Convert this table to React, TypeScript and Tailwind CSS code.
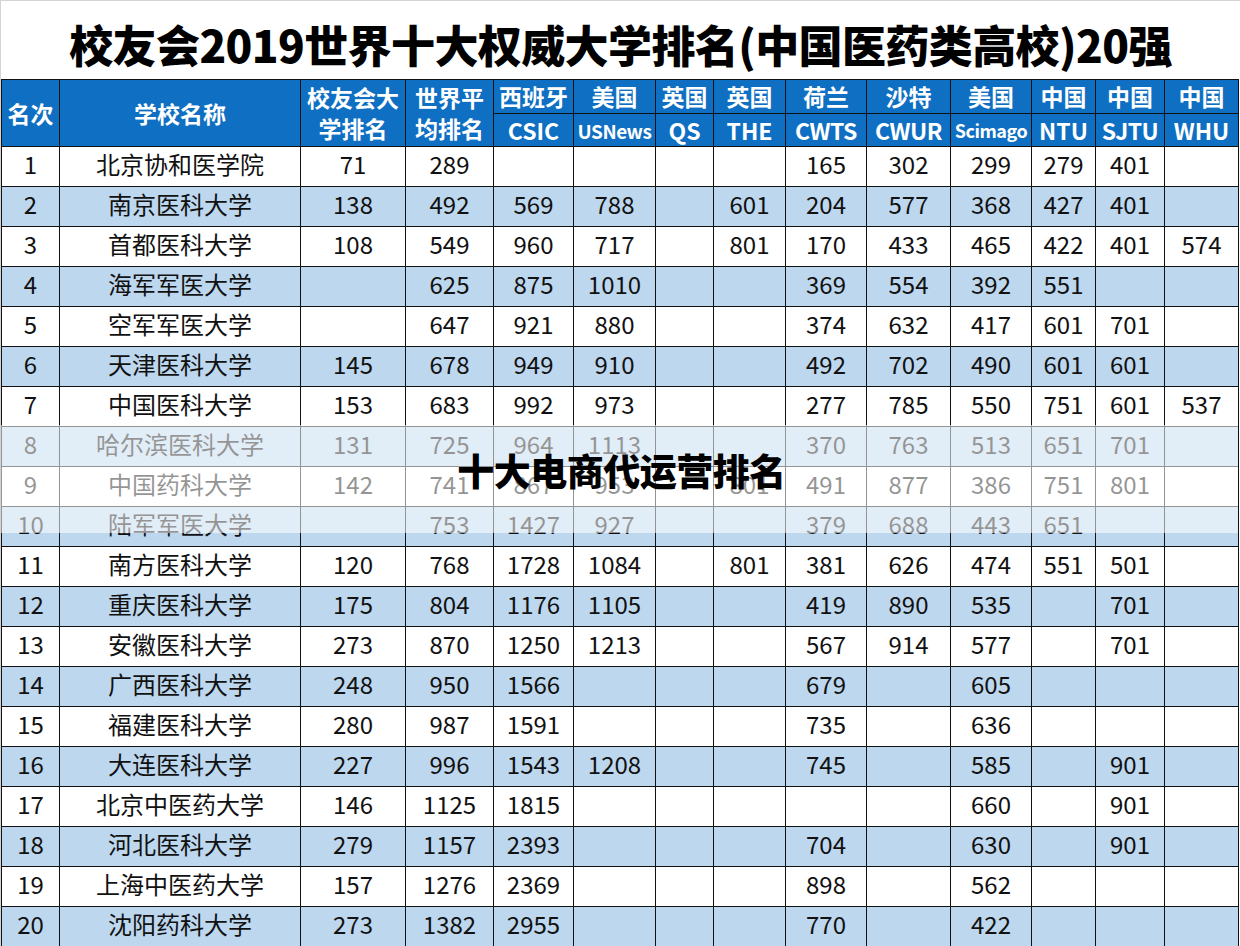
const FONT = "font-['Noto_Sans_CJK_SC','Noto_Sans',sans-serif]";

type Row = [number, string, ...(string | number)[]];

const rows: Row[] = [
  [1, "北京协和医学院", 71, 289, "", "", "", "", 165, 302, 299, 279, 401, ""],
  [2, "南京医科大学", 138, 492, 569, 788, "", 601, 204, 577, 368, 427, 401, ""],
  [3, "首都医科大学", 108, 549, 960, 717, "", 801, 170, 433, 465, 422, 401, 574],
  [4, "海军军医大学", "", 625, 875, 1010, "", "", 369, 554, 392, 551, "", ""],
  [5, "空军军医大学", "", 647, 921, 880, "", "", 374, 632, 417, 601, 701, ""],
  [6, "天津医科大学", 145, 678, 949, 910, "", "", 492, 702, 490, 601, 601, ""],
  [7, "中国医科大学", 153, 683, 992, 973, "", "", 277, 785, 550, 751, 601, 537],
  [8, "哈尔滨医科大学", 131, 725, 964, 1113, "", "", 370, 763, 513, 651, 701, ""],
  [9, "中国药科大学", 142, 741, 867, 953, "", 801, 491, 877, 386, 751, 801, ""],
  [10, "陆军军医大学", "", 753, 1427, 927, "", "", 379, 688, 443, 651, "", ""],
  [11, "南方医科大学", 120, 768, 1728, 1084, "", 801, 381, 626, 474, 551, 501, ""],
  [12, "重庆医科大学", 175, 804, 1176, 1105, "", "", 419, 890, 535, "", 701, ""],
  [13, "安徽医科大学", 273, 870, 1250, 1213, "", "", 567, 914, 577, "", 701, ""],
  [14, "广西医科大学", 248, 950, 1566, "", "", "", 679, "", 605, "", "", ""],
  [15, "福建医科大学", 280, 987, 1591, "", "", "", 735, "", 636, "", "", ""],
  [16, "大连医科大学", 227, 996, 1543, 1208, "", "", 745, "", 585, "", 901, ""],
  [17, "北京中医药大学", 146, 1125, 1815, "", "", "", "", "", 660, "", 901, ""],
  [18, "河北医科大学", 279, 1157, 2393, "", "", "", 704, "", 630, "", 901, ""],
  [19, "上海中医药大学", 157, 1276, 2369, "", "", "", 898, "", 562, "", "", ""],
  [20, "沈阳药科大学", 273, 1382, 2955, "", "", "", 770, "", 422, "", "", ""],
];

// country / ranking source pairs for the split header columns
const sources = [
  { top: "西班牙", bottom: "CSIC", size: "text-[23px]" },
  { top: "美国", bottom: "USNews", size: "text-[19px] tracking-[-0.5px]" },
  { top: "英国", bottom: "QS", size: "text-[23px]" },
  { top: "英国", bottom: "THE", size: "text-[23px]" },
  { top: "荷兰", bottom: "CWTS", size: "text-[23px] tracking-[-0.5px]" },
  { top: "沙特", bottom: "CWUR", size: "text-[23px] tracking-[-0.5px]" },
  { top: "美国", bottom: "Scimago", size: "text-[18px] tracking-[-0.5px]" },
  { top: "中国", bottom: "NTU", size: "text-[23px]" },
  { top: "中国", bottom: "SJTU", size: "text-[23px] tracking-[-0.5px]" },
  { top: "中国", bottom: "WHU", size: "text-[23px]" },
];

const th = "border border-[#111] bg-[#0f6fc2] text-white font-bold leading-none text-center p-0 overflow-hidden whitespace-nowrap";
const td = "border border-[#111] text-[24px] leading-none text-center px-0 pt-0 pb-[5px] text-[#111]";

export default function App() {
  return (
    <div className={`w-[1240px] h-[946px] bg-white border-t border-l border-[#d4d4d4] ${FONT}`}>
      <h1 className="h-[78px] flex items-center justify-center text-[44px] font-black tracking-[-0.6px] text-black pt-[8px]">
        校友会2019世界十大权威大学排名(中国医药类高校)20强
      </h1>

      <div className="relative w-[1237px]">
        <table className="table-fixed border-collapse w-[1237px]">
          <colgroup>
            <col className="w-[58px]" />
            <col className="w-[241px]" />
            <col className="w-[105px]" />
            <col className="w-[88px]" />
            <col className="w-[80px]" />
            <col className="w-[82px]" />
            <col className="w-[58px]" />
            <col className="w-[72px]" />
            <col className="w-[81px]" />
            <col className="w-[84px]" />
            <col className="w-[81px]" />
            <col className="w-[64px]" />
            <col className="w-[69px]" />
            <col className="w-[74px]" />
          </colgroup>
          <thead>
            <tr className="h-[34px]">
              <th rowSpan={2} className={`${th} text-[23px]`}>名次</th>
              <th rowSpan={2} className={`${th} text-[23px]`}>学校名称</th>
              <th rowSpan={2} className={`${th} text-[23px]`}>
                <div className="flex flex-col gap-[8px]">
                  <span>校友会大</span>
                  <span>学排名</span>
                </div>
              </th>
              <th rowSpan={2} className={`${th} text-[23px]`}>
                <div className="flex flex-col gap-[8px]">
                  <span>世界平</span>
                  <span>均排名</span>
                </div>
              </th>
              {sources.map((s, i) => (
                <th key={i} className={`${th} text-[23px]`}>{s.top}</th>
              ))}
            </tr>
            <tr className="h-[33px]">
              {sources.map((s, i) => (
                <th key={i} className={`${th} ${s.size}`}>{s.bottom}</th>
              ))}
            </tr>
          </thead>
          <tbody>
            {rows.map((r) => (
              <tr key={r[0]} className={`h-[40px] ${r[0] % 2 === 0 ? "bg-[#bdd7ee]" : "bg-white"}`}>
                {r.map((v, j) => (
                  <td key={j} className={td}>{v}</td>
                ))}
              </tr>
            ))}
          </tbody>
        </table>

        {/* translucent watermark band over rows 8-10 */}
        <div className="absolute left-0 right-0 top-[346px] h-[108px] bg-white/55 flex justify-center pt-[27px] pl-[4px]">
          <span className="text-[37px] font-black leading-none text-black tracking-[-0.5px]">
            十大电商代运营排名
          </span>
        </div>
      </div>
    </div>
  );
}
